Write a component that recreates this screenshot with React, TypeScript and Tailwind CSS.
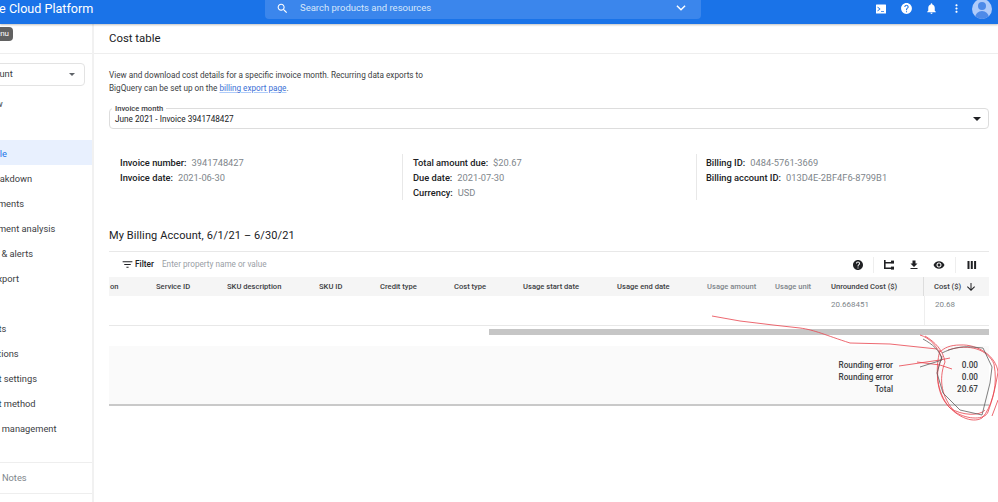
import React from "react";

const P = ({ d, className }: { d: string; className?: string }) => (
  <svg viewBox="0 0 24 24" className={className} fill="currentColor"><path d={d} /></svg>
);

const side: [string, boolean?][] = [
  ["Overview"], ["Reports"], ["Cost table", true], ["Cost breakdown"], ["Commitments"], ["Commitment analysis"], ["Budgets & alerts"], ["Billing export"],
  [""], ["Payments"], ["Transactions"], ["Payment settings"], ["Payment method"], ["Account management"],
];

const cols: [string, string][] = [
  ["on", "text-[#3c4043]"], ["Service ID", "text-[#3c4043]"], ["SKU description", "text-[#3c4043]"], ["SKU ID", "text-[#3c4043]"], ["Credit type", "text-[#3c4043]"], ["Cost type", "text-[#3c4043]"],
  ["Usage start date", "text-[#3c4043]"], ["Usage end date", "text-[#3c4043]"], ["Usage amount", "text-[#80868b]"], ["Usage unit", "text-[#80868b]"], ["Unrounded Cost ($)", "text-[#3c4043]"],
];

const Info = ({ k, v }: { k: string; v: string }) => (
  <div className="h-[15px] leading-[15px] whitespace-nowrap">
    <span className="font-medium text-[#202124]">{k}:</span>
    <span className="ml-[5px] text-[#80868b]">{v}</span>
  </div>
);

export default function App() {
  return (
    <div className="relative h-[502px] w-[998px] overflow-hidden bg-white font-['Roboto',sans-serif] text-[#3c4043]">
      <header className="relative z-10 flex h-[24px] items-start bg-[#1a73e8] text-white shadow-[0_1px_2px_rgba(0,0,0,0.25)]">
        <div className="ml-[-34px] w-[299px] text-[12.6px] leading-[17px] whitespace-nowrap">Google Cloud Platform</div>
        <div className="flex h-[19px] w-[436px] items-center rounded-b bg-[#3b86ec] pb-[3px] pl-[11px] pr-[13px] text-[#d6e6fb]">
          <P className="h-[13px] w-[13px] text-white" d="M15.5 14h-.79l-.28-.27C15.41 12.59 16 11.11 16 9.5 16 5.91 13.09 3 9.5 3S3 5.91 3 9.5 5.91 16 9.5 16c1.61 0 3.09-.59 4.23-1.57l.27.28v.79l5 4.99L20.49 19l-4.99-5zm-6 0C7.01 14 5 11.99 5 9.5S7.01 5 9.5 5 14 7.01 14 9.5 11.99 14 9.5 14z" />
          <span className="ml-[11px] flex-1 text-[9.5px]">Search products and resources</span>
          <svg viewBox="0 0 24 24" className="h-[14px] w-[14px] text-white" fill="none" stroke="currentColor" strokeWidth="2.4"><path d="M5 8l7 7 7-7" /></svg>
        </div>
        <div className="ml-[174px] flex h-[17px] items-center">
          <svg viewBox="0 0 24 24" className="h-[12px] w-[12px]" fill="currentColor"><path fillRule="evenodd" d="M3 3h18a1 1 0 011 1v16a1 1 0 01-1 1H3a1 1 0 01-1-1V4a1 1 0 011-1zm2 4v2.200L8.500 12 5 14.800V17l6-5-6-5zm7 9v1.600h6V16h-6z" /></svg>
          <P className="ml-[13px] h-[13px] w-[13px]" d="M12 2C6.48 2 2 6.48 2 12s4.48 10 10 10 10-4.48 10-10S17.52 2 12 2zm1 17h-2v-2h2v2zm2.07-7.75l-.9.92C13.45 12.9 13 13.5 13 15h-2v-.5c0-1.1.45-2.1 1.17-2.83l1.24-1.26c.37-.36.59-.86.59-1.41 0-1.1-.9-2-2-2s-2 .9-2 2H8c0-2.21 1.79-4 4-4s4 1.79 4 4c0 .88-.36 1.68-.93 2.25z" />
          <P className="ml-[12px] h-[13px] w-[13px]" d="M12 22c1.1 0 2-.9 2-2h-4c0 1.1.89 2 2 2zm6-6v-5c0-3.07-1.64-5.64-4.5-6.32V4c0-.83-.67-1.5-1.5-1.5s-1.5.67-1.5 1.5v.68C7.63 5.36 6 7.92 6 11v5l-2 2v1h16v-1l-2-2z" />
          <P className="ml-[12px] h-[13px] w-[13px]" d="M12 8c1.1 0 2-.9 2-2s-.9-2-2-2-2 .9-2 2 .9 2 2 2zm0 2c-1.1 0-2 .9-2 2s.9 2 2 2 2-.9 2-2-.9-2-2-2zm0 6c-1.1 0-2 .9-2 2s.9 2 2 2 2-.9 2-2-.9-2-2-2z" />
          <div className="relative ml-[9px] h-[20px] w-[20px] overflow-hidden rounded-full bg-[#aecbfa]">
            <div className="mx-auto mt-[3px] h-[8px] w-[8px] rounded-full bg-[#4d8ae8]" />
            <div className="mx-auto mt-[1px] h-[10px] w-[14px] rounded-t-full bg-[#4d8ae8]" />
          </div>
        </div>
      </header>

      <div className="flex h-[478px]">
        <aside className="relative flex w-[94px] shrink-0 flex-col overflow-hidden border-r-2 border-[#f1f1f1] text-[9.3px] text-[#3c4043]">
          <div className="h-[30px] shrink-0 border-b border-[#eeeeee] pt-[11px] leading-[13px]"><div className="ml-[-28px]">Billing</div></div>
          <div className="mt-[9px] ml-[-40px] flex h-[23px] w-[125px] shrink-0 items-center rounded border border-[#e3e3e3] pb-[1px] pl-[10px] pr-[9px]">
            <span className="ml-[-35px] flex-1 whitespace-nowrap">My Billing Account</span>
            <span className="h-0 w-0 border-x-[3px] border-t-[3px] border-x-transparent border-t-[#5f6368]" />
          </div>
          <nav className="mt-[4px] shrink-0">
            {side.map(([t, sel], i) => (
              <div key={i} className={`flex h-[25px] items-center whitespace-nowrap ${sel ? "bg-[#e8f0fe]" : ""}`}>
                <span className={`ml-[-35px] mt-[2px] ${sel ? "text-[#1a73e8]" : ""}`}>{t}</span>
              </div>
            ))}
          </nav>
          <div className="mt-[22px] flex h-[32px] shrink-0 items-center border-y border-[#eeeeee] text-[#80868b]"><span className="ml-[-33px] whitespace-nowrap">Release Notes</span></div>
          <div className="absolute left-[-30px] top-[3px] flex h-[14px] w-[43px] items-center justify-end rounded-sm bg-[#616161] pr-[4px] text-[8px] text-white">Menu</div>
        </aside>

        <main className="min-w-0 flex-1 text-[9.3px]">
          <div className="flex h-[30px] items-center border-b border-[#eeeeee] pl-[15px] text-[11.4px] text-[#202124]">Cost table</div>
          <div className="pl-[15px] pr-[9px]">
            <p className="mt-[15px] text-[8.2px] leading-[13px] text-[#3c4043]">
              View and download cost details for a specific invoice month. Recurring data exports to<br />BigQuery can be set up on the <span className="text-[#3b6fd6] underline decoration-[#aecbfa]">billing export page</span>.
            </p>
            <div className="relative mt-[13px] flex h-[21px] items-center rounded border border-[#dddddd] pl-[5px] pr-[7px] text-[8.2px] text-[#202124]">
              <span className="absolute top-[-5px] left-[2px] bg-white px-[3px] text-[7.6px] font-medium leading-[10px] text-[#3c4043]">Invoice month</span>
              <span className="mt-[2px] flex-1">June 2021 - Invoice 3941748427</span>
              <span className="h-0 w-0 border-x-[4px] border-t-[4px] border-x-transparent border-t-[#202124]" />
            </div>
            <div className="mt-[25px] grid h-[46px] grid-cols-[293px_294px_1fr]">
              <div className="pl-[11px] pt-[1px]">
                <Info k="Invoice number" v="3941748427" /><Info k="Invoice date" v="2021-06-30" />
              </div>
              <div className="border-l border-[#e8e8e8] pl-[10px] pt-[1px]">
                <Info k="Total amount due" v="$20.67" /><Info k="Due date" v="2021-07-30" /><Info k="Currency" v="USD" />
              </div>
              <div className="border-l border-[#e8e8e8] pl-[9px] pt-[1px]">
                <Info k="Billing ID" v="0484-5761-3669" /><Info k="Billing account ID" v="013D4E-2BF4F6-8799B1" />
              </div>
            </div>
            <h2 className="mt-[27px] text-[11px] leading-[18px] tracking-[0.1px] font-normal text-[#202124]">My Billing Account, 6/1/21 – 6/30/21</h2>
            <div className="mt-[6px] flex h-[26px] items-center border-t border-[#e8e8e8] pl-[12px] text-[#202124]">
              <P className="h-[13px] w-[13px]" d="M10 18h4v-2h-4v2zM3 6v2h18V6H3zm3 7h12v-2H6v2z" />
              <span className="ml-[1px] text-[8.3px] font-medium">Filter</span>
              <span className="ml-[8px] flex-1 text-[8.2px] text-[#9aa0a6]">Enter property name or value</span>
              <P className="h-[12px] w-[12px]" d="M12 2C6.48 2 2 6.48 2 12s4.48 10 10 10 10-4.48 10-10S17.52 2 12 2zm1 17h-2v-2h2v2zm2.07-7.75l-.9.92C13.45 12.9 13 13.5 13 15h-2v-.5c0-1.1.45-2.1 1.17-2.83l1.24-1.26c.37-.36.59-.86.59-1.41 0-1.1-.9-2-2-2s-2 .9-2 2H8c0-2.21 1.79-4 4-4s4 1.79 4 4c0 .88-.36 1.68-.93 2.25z" />
              <span className="mx-[9px] h-[16px] w-px bg-[#eeeeee]" />
              <svg viewBox="0 0 12 12" className="h-[12px] w-[12px]" fill="currentColor"><path d="M1 1h1.600v9H1zM1 3h7v1.400H1zM1 8.600h7V10H1z" /><rect x="8" y="1.600" width="3" height="3" /><rect x="8" y="7.600" width="3" height="3" /></svg>
              <P className="ml-[13px] h-[12px] w-[12px]" d="M19 9h-4V3H9v6H5l7 7 7-7zM5 18v2h14v-2H5z" />
              <P className="ml-[13px] h-[12px] w-[12px]" d="M12 4.500C7 4.500 2.730 7.610 1 12c1.730 4.390 6 7.500 11 7.500s9.270-3.110 11-7.500c-1.730-4.390-6-7.500-11-7.500zM12 17c-2.760 0-5-2.240-5-5s2.240-5 5-5 5 2.240 5 5-2.240 5-5 5zm0-8c-1.660 0-3 1.340-3 3s1.340 3 3 3 3-1.340 3-3-1.340-3-3-3z" />
              <span className="mx-[10px] h-[16px] w-px bg-[#eeeeee]" />
              <svg viewBox="0 0 12 12" className="mr-[11px] h-[12px] w-[12px]" fill="currentColor"><path d="M1.500 2h2v8h-2zM4.800 2h2v8h-2zM8.100 2h2v8h-2z" /></svg>
            </div>
            <div className="grid h-[19px] grid-cols-[46px_71px_92px_61px_74px_69px_94px_90px_68px_56px_93px_1fr] items-center bg-[#f5f5f5] text-[7.6px] font-medium">
              {cols.map(([c, cl]) => (<div key={c} className={`pl-px whitespace-nowrap ${cl}`}>{c}</div>))}
              <div className="flex h-full items-center border-l border-[#dddddd] pl-[10px] text-[#3c4043]">Cost ($)
                <P className="ml-[4px] h-[12px] w-[12px] text-[#202124]" d="M20 12l-1.41-1.41L13 16.17V4h-2v12.17l-5.58-5.59L4 12l8 8 8-8z" />
              </div>
            </div>
            <div className="flex h-[30px] border-b border-[#e8e8e8] text-[8px] text-[#80868b]">
              <div className="w-[722px]" />
              <div className="w-[93px] pt-[3px] whitespace-nowrap">20.668451</div>
              <div className="flex-1 border-l border-[#eeeeee] pl-[10px] pt-[3px]">20.68</div>
            </div>
            <div className="mt-[3px] flex h-[6px] justify-end"><div className="h-full w-[500px] bg-[#c6c6c6]" /></div>
            <div className="mt-[11px] h-[60px] border-b-2 border-[#c9c9c9] bg-[#fafafa] pt-[13px] text-[8.2px] leading-[12px] font-medium text-[#3c4043]">
              {[["Rounding error", "0.00"], ["Rounding error", "0.00"], ["Total", "20.67"]].map(([a, b], i) => (
                <div key={i} className="flex justify-end">
                  <span>{a}</span>
                  <span className="w-[96px] pr-[11px] text-right">{b}</span>
                </div>
              ))}
            </div>
          </div>
        </main>
      </div>

      <svg className="absolute inset-0 z-20" width="998" height="502" viewBox="0 0 998 502" fill="none" strokeWidth="0.8">
        <path stroke="#e8434c" d="M712 316L740 321L773 325L800 328C815 330 825 335 850 343L890 344L937 349" />
        <path stroke="#e8434c" d="M899 366L940 360L950 358M917 362L940 365L952 369M920 335C930 338 937 346 942 358" />
        <path stroke="#e8434c" d="M942 358C934 372 938 392 945 402C955 416 972 424 982 418C992 408 996 384 998 372C996 356 978 344 960 345C950 345 944 348 940 352" />
        <path stroke="#e8434c" d="M925 336C935 342 943 350 945 362C938 380 942 398 955 412C968 420 985 420 988 412C992 400 998 386 994 364C988 350 970 343 948 350" />
        <path stroke="#e8434c" d="M940 350C935 370 936 392 950 408C962 416 980 416 985 410M998 400L992 416" />
        <path stroke="#5f5f5f" d="M923 339C932 344 940 350 942 360L920 367M942 353C952 348 962 346 972 347L983 348L992 367L990 383L982 415L960 410L943 393L937 373L942 356" />
      </svg>
    </div>
  );
}
